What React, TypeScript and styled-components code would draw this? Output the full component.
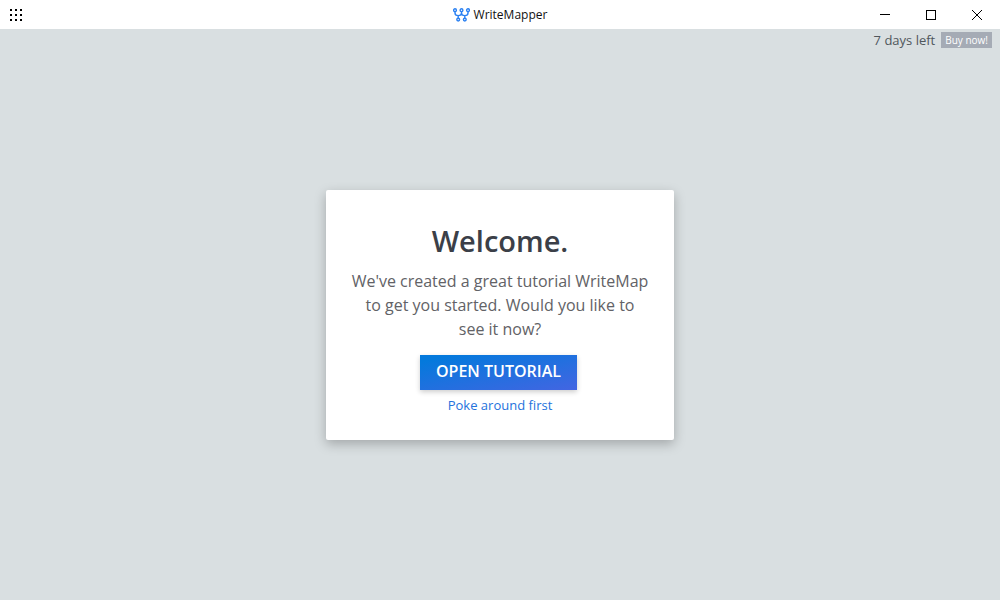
import React from "react";
import styled, { createGlobalStyle } from "styled-components";

const GlobalStyle = createGlobalStyle`
  *, *::before, *::after { box-sizing: border-box; }
  body {
    margin: 0;
    background: #d9dfe1;
    font-family: "Segoe UI", "Open Sans", sans-serif;
  }
  button { font-family: inherit; }
`;

const Window = styled.div`
  display: flex;
  flex-direction: column;
  min-height: 100vh;
`;

const TitleBar = styled.header`
  display: grid;
  grid-template-columns: 1fr auto 1fr;
  align-items: center;
  height: 29px;
  background: #fff;
`;

const BarButton = styled.button<{ $width: number }>`
  display: flex;
  align-items: center;
  justify-content: center;
  width: ${(p) => p.$width}px;
  height: 29px;
  padding: 0;
  border: 0;
  background: transparent;
  color: #000;
`;

const Brand = styled.div`
  display: flex;
  align-items: center;
  gap: 4px;
  color: #111;
  font-size: 12px;
  line-height: 16px;
`;

const WindowControls = styled.div`
  display: flex;
  justify-content: flex-end;
`;

const Workspace = styled.main`
  flex: 1;
  display: grid;
  grid-template: 1fr / 1fr;
`;

const License = styled.div`
  grid-area: 1 / 1;
  align-self: start;
  justify-self: end;
  display: flex;
  align-items: center;
  gap: 6px;
  padding: 2px 8px;
  color: #50575c;
  font-size: 13px;
  line-height: 18px;
`;

const BuyButton = styled.button`
  height: 16px;
  padding: 0 4px;
  border: 0;
  background: #a5abb5;
  color: #fff;
  font-size: 10px;
  font-weight: 400;
  line-height: 16px;
`;

const Card = styled.section`
  grid-area: 1 / 1;
  place-self: center;
  display: flex;
  flex-direction: column;
  align-items: center;
  width: 348px;
  max-width: 100%;
  padding: 31px 25px 26px;
  border-radius: 2px;
  background: #fff;
  box-shadow: 0 4px 12px rgba(0, 0, 0, 0.25);
  text-align: center;
`;

const Heading = styled.h1`
  margin: 0 0 8px;
  color: #3b3f48;
  font-size: 29px;
  font-weight: 600;
  line-height: 40px;
`;

const Message = styled.p`
  margin: 0 0 14px;
  color: #626266;
  font-size: 16px;
  line-height: 24px;
`;

const PrimaryButton = styled.button`
  height: 35px;
  margin-right: 3px;
  padding: 0 16px 2px;
  border: 0;
  background: linear-gradient(to bottom right, #0479dc 10%, #4365e2 100%);
  box-shadow: 0 2px 5px rgba(0, 0, 0, 0.2);
  color: #fff;
  font-size: 16px;
  font-weight: 600;
  line-height: 24px;
  white-space: nowrap;
`;

const SkipLink = styled.a`
  margin-top: 6px;
  color: #2472dc;
  font-size: 13px;
  line-height: 18px;
  text-decoration: none;
`;

function GridIcon() {
  const steps = [0, 5, 10];
  return (
    <svg width="12" height="12" viewBox="0 0 12 12" fill="currentColor" shapeRendering="crispEdges" aria-hidden="true">
      {steps.map((y) => steps.map((x) => <rect key={`${x}-${y}`} x={x} y={y} width="2" height="2" />))}
    </svg>
  );
}

function Logo() {
  return (
    <svg width="17" height="14" viewBox="0 0 17 14" fill="none" stroke="#2a80f2" strokeWidth="1.4" aria-hidden="true">
      <circle cx="2" cy="2.2" r="1.4" />
      <circle cx="8.5" cy="2.2" r="1.4" />
      <circle cx="15" cy="2.2" r="1.4" />
      <circle cx="5.2" cy="11.6" r="1.4" />
      <circle cx="11.8" cy="11.6" r="1.4" />
      <path d="M2 3.6v1.4q0 2.6 3.2 2.6q3.3 0 3.3-2.6V3.6M8.5 5q0 2.6 3.3 2.6q3.2 0 3.2-2.6V3.6M5.2 7.6v2.6M11.8 7.6v2.6" />
    </svg>
  );
}

export default function App() {
  return (
    <>
      <GlobalStyle />
      <Window>
        <TitleBar>
          <BarButton $width={32} aria-label="Menu">
            <GridIcon />
          </BarButton>
          <Brand>
            <Logo />
            WriteMapper
          </Brand>
          <WindowControls>
            <BarButton $width={46} aria-label="Minimize">
              <svg width="10" height="10" viewBox="0 0 10 10" stroke="currentColor" aria-hidden="true">
                <path d="M0 4.5h10" />
              </svg>
            </BarButton>
            <BarButton $width={46} aria-label="Maximize">
              <svg width="10" height="10" viewBox="0 0 10 10" fill="none" stroke="currentColor" aria-hidden="true">
                <rect x="0.5" y="0.5" width="9" height="9" />
              </svg>
            </BarButton>
            <BarButton $width={46} aria-label="Close">
              <svg width="10" height="10" viewBox="0 0 10 10" stroke="currentColor" aria-hidden="true">
                <path d="M0 0l10 10M10 0L0 10" />
              </svg>
            </BarButton>
          </WindowControls>
        </TitleBar>
        <Workspace>
          <License>
            <span>7 days left</span>
            <BuyButton>Buy now!</BuyButton>
          </License>
          <Card>
            <Heading>Welcome.</Heading>
            <Message>We've created a great tutorial WriteMap to get you started. Would you like to see it now?</Message>
            <PrimaryButton>OPEN TUTORIAL</PrimaryButton>
            <SkipLink href="#canvas">Poke around first</SkipLink>
          </Card>
        </Workspace>
      </Window>
    </>
  );
}
